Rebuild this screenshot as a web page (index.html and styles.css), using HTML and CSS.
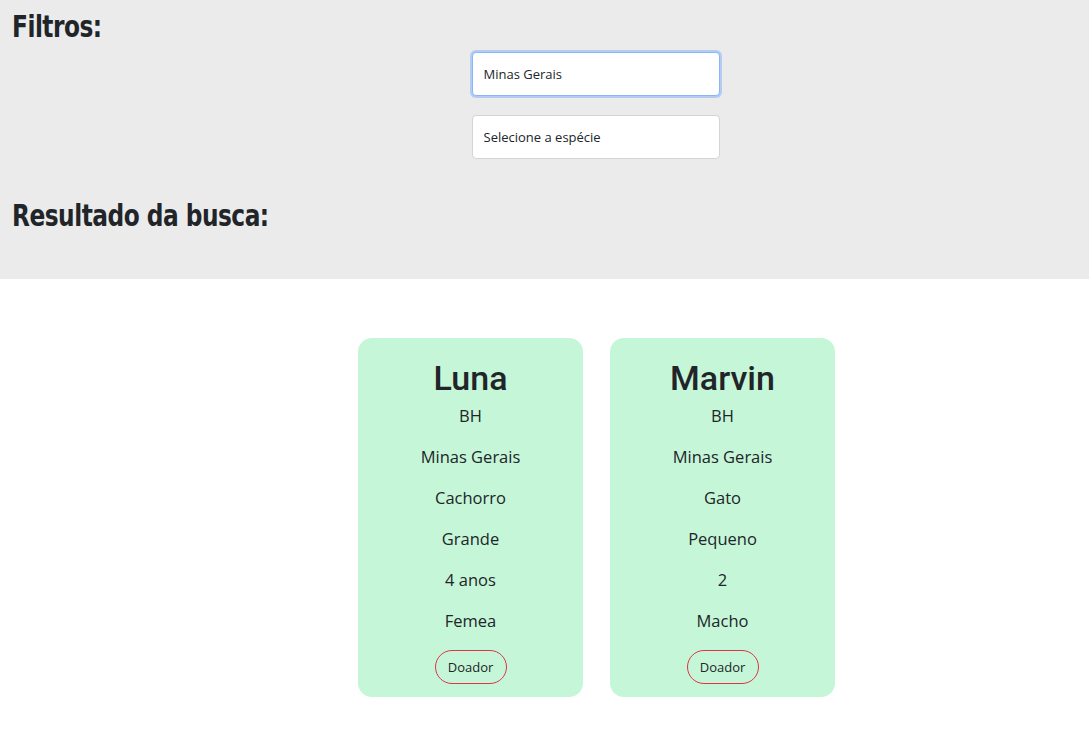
FILE: index.html
```html
<!DOCTYPE html>
<html lang="pt-BR">
<head>
<meta charset="utf-8">
<title>Busca</title>
<link rel="stylesheet" href="styles.css">
</head>
<body>
<section class="filters">
  <h2 class="title"><span class="title-text">Filtros:</span></h2>
  <form class="filter-form">
    <input class="field field-focus" type="text" value="Minas Gerais">
    <div class="field field-select">Selecione a espécie</div>
  </form>
  <h2 class="title title-results"><span class="title-text">Resultado da busca:</span></h2>
</section>
<main class="results">
  <div class="card">
    <h3 class="card-name">Luna</h3>
    <p class="card-line">BH</p>
    <p class="card-line">Minas Gerais</p>
    <p class="card-line">Cachorro</p>
    <p class="card-line">Grande</p>
    <p class="card-line">4 anos</p>
    <p class="card-line">Femea</p>
    <button class="donor" type="button">Doador</button>
  </div>
  <div class="card">
    <h3 class="card-name">Marvin</h3>
    <p class="card-line">BH</p>
    <p class="card-line">Minas Gerais</p>
    <p class="card-line">Gato</p>
    <p class="card-line">Pequeno</p>
    <p class="card-line">2</p>
    <p class="card-line">Macho</p>
    <button class="donor" type="button">Doador</button>
  </div>
</main>
</body>
</html>
```

FILE: styles.css
```css
* { box-sizing: border-box; }
html, body { margin: 0; padding: 0; }
body {
  font-family: "Open Sans", "Noto Sans", sans-serif;
  color: #212529;
  background: #fff;
}
.filters {
  background: #ebebeb;
  padding: 7px 12px 0 12px;
  height: 279px;
}
.title {
  font-family: "DejaVu Sans", "Liberation Sans", sans-serif;
  font-stretch: condensed;
  font-weight: 700;
  font-size: 31px;
  line-height: 38px;
  margin: 0;
  color: #212529;
}
.title-text {
  display: inline-block;
  transform: scaleX(0.835);
  transform-origin: left center;
  letter-spacing: -0.6px;
}
.filter-form {
  display: flex;
  flex-direction: column;
  align-items: center;
  gap: 19px;
  padding-left: 102px;
  margin-top: 7px;
}
.field {
  width: 248px;
  height: 44px;
  background: #fff;
  border: 1px solid #d4d4d4;
  border-radius: 4px;
  padding: 0 11px;
  font-family: "Open Sans", sans-serif;
  font-size: 13px;
  color: #212529;
  display: flex;
  align-items: center;
}
.field-focus {
  border-color: #86b7fe;
  box-shadow: 0 0 0 2px rgba(13, 110, 253, 0.25);
  outline: none;
}
.title-results {
  margin-top: 37px;
}
.results {
  display: flex;
  justify-content: center;
  gap: 27px;
  padding: 59px 0 0 104px;
}
.card {
  width: 225px;
  height: 359px;
  background: #c6f6d8;
  border-radius: 14px;
  padding: 18px 10px 13px;
  display: flex;
  flex-direction: column;
  align-items: center;
  text-align: center;
}
.card-name {
  font-family: Roboto, "Noto Sans", sans-serif;
  font-weight: 500;
  font-size: 34px;
  line-height: 44px;
  margin: 0 0 3px;
}
.card-line {
  font-size: 16.5px;
  line-height: 25px;
  margin: 0 0 16px;
}
.donor {
  margin-top: auto;
  width: 72px;
  height: 34px;
  background: transparent;
  border: 1px solid #dc3545;
  border-radius: 17px;
  font-family: "Open Sans", sans-serif;
  font-size: 13px;
  color: #212529;
  padding: 0;
}
```
